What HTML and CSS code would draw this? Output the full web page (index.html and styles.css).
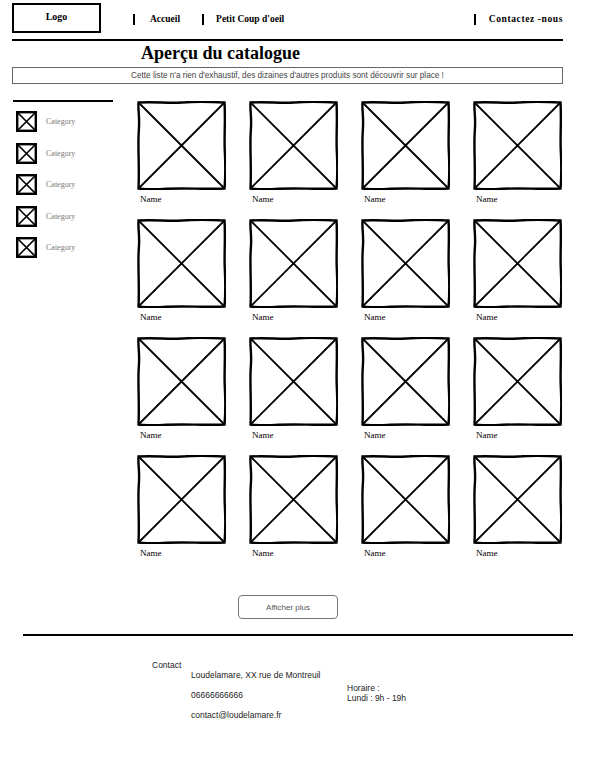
FILE: index.html
```html
<!DOCTYPE html>
<html lang="fr">
<head>
    <meta charset="UTF-8">
    <title>Aperçu du catalogue</title>
    <link rel="stylesheet" href="styles.css">
</head>
<body>
    <!-- formes réutilisées -->
    <svg class="defs" width="0" height="0">
        <symbol id="ph" viewBox="0 0 89 89">
            <path d="M1.5 1.5 C20 0.4 30 2.6 45 1.5 S70 0.6 87.5 1.5 C88.6 20 87 35 87.8 50 S88.6 75 87.5 87.5 C65 88.6 50 86.6 30 87.8 S10 88.2 1.5 87.5 C2.6 65 0.6 45 1.8 30 S0.8 10 1.5 1.5 Z" fill="#fff" stroke="#000" stroke-width="2.4"/>
            <path d="M1.5 1.5 L87.5 87.5 M87.5 1.5 L1.5 87.5" stroke="#000" stroke-width="1.8"/>
        </symbol>
        <symbol id="cat" viewBox="0 0 21 21">
            <rect x="1.2" y="1.2" width="18.6" height="18.6" fill="#fff" stroke="#000" stroke-width="2.4"/>
            <path d="M1.5 1.5 L19.5 19.5 M19.5 1.5 L1.5 19.5" stroke="#000" stroke-width="1.7"/>
        </symbol>
    </svg>

    <header class="topbar">
        <div class="logo">Logo</div>
        <nav class="nav">
            <a href="#" class="nav-link">Accueil</a>
            <a href="#" class="nav-link nav-short">Petit Coup d'oeil</a>
            <a href="#" class="nav-link nav-right">Contactez -nous</a>
        </nav>
    </header>

    <h1 class="title">Aperçu du catalogue</h1>
    <div class="banner">Cette liste n'a rien d'exhaustif, des dizaines d'autres produits sont  découvrir sur place !</div>

    <main class="catalogue">
        <aside class="sidebar">
            <ul class="categories">
                <li><svg class="cat-icon"><use href="#cat"/></svg>Category</li>
                <li><svg class="cat-icon"><use href="#cat"/></svg>Category</li>
                <li><svg class="cat-icon"><use href="#cat"/></svg>Category</li>
                <li><svg class="cat-icon"><use href="#cat"/></svg>Category</li>
                <li><svg class="cat-icon"><use href="#cat"/></svg>Category</li>
            </ul>
        </aside>

        <section class="grid">
            <div class="product"><svg class="thumb"><use href="#ph"/></svg><span class="name">Name</span></div>
            <div class="product"><svg class="thumb"><use href="#ph"/></svg><span class="name">Name</span></div>
            <div class="product"><svg class="thumb"><use href="#ph"/></svg><span class="name">Name</span></div>
            <div class="product"><svg class="thumb"><use href="#ph"/></svg><span class="name">Name</span></div>
            <div class="product"><svg class="thumb"><use href="#ph"/></svg><span class="name">Name</span></div>
            <div class="product"><svg class="thumb"><use href="#ph"/></svg><span class="name">Name</span></div>
            <div class="product"><svg class="thumb"><use href="#ph"/></svg><span class="name">Name</span></div>
            <div class="product"><svg class="thumb"><use href="#ph"/></svg><span class="name">Name</span></div>
            <div class="product"><svg class="thumb"><use href="#ph"/></svg><span class="name">Name</span></div>
            <div class="product"><svg class="thumb"><use href="#ph"/></svg><span class="name">Name</span></div>
            <div class="product"><svg class="thumb"><use href="#ph"/></svg><span class="name">Name</span></div>
            <div class="product"><svg class="thumb"><use href="#ph"/></svg><span class="name">Name</span></div>
            <div class="product"><svg class="thumb"><use href="#ph"/></svg><span class="name">Name</span></div>
            <div class="product"><svg class="thumb"><use href="#ph"/></svg><span class="name">Name</span></div>
            <div class="product"><svg class="thumb"><use href="#ph"/></svg><span class="name">Name</span></div>
            <div class="product"><svg class="thumb"><use href="#ph"/></svg><span class="name">Name</span></div>
        </section>
    </main>

    <div class="more">
        <button class="more-button">Afficher plus</button>
    </div>

    <footer class="footer">
        <div class="contact-label">Contact</div>
        <div class="contact-lines">
            <p>Loudelamare, XX rue de Montreuil</p>
            <p>06666666666</p>
            <p>contact@loudelamare.fr</p>
        </div>
        <div class="hours">
            <p>Horaire :</p>
            <p>Lundi : 9h - 19h</p>
        </div>
    </footer>
</body>
</html>
```

FILE: styles.css
```css
body {
    margin: 0;
    width: 605px;
    font-family: "Liberation Serif", "Times New Roman", serif;
    color: #000;
    background: #fff;
}
.defs {
    position: absolute;
}

/* en-tête */
.topbar {
    display: flex;
    align-items: center;
    width: 551px;
    margin-left: 12px;
    padding-top: 3px;
    padding-bottom: 6px;
    border-bottom: 2px solid #000;
}
.logo {
    width: 85px;
    height: 26px;
    border: 2px solid #000;
    border-bottom-width: 2.5px;
    text-align: center;
    font-size: 10px;
    font-weight: bold;
    line-height: 24px;
}
.nav {
    display: flex;
    flex: 1;
    align-items: center;
    margin-left: 32px;
    padding-top: 2px;
}
.nav-link {
    display: flex;
    align-items: center;
    margin-right: 22px;
    color: #000;
    text-decoration: none;
    font-size: 9.5px;
    font-weight: bold;
}
.nav-link::before {
    content: '';
    width: 2px;
    height: 11px;
    margin-right: 15px;
    background: #000;
}
.nav-short::before {
    margin-right: 12px;
}
.nav-right {
    margin-left: auto;
    margin-right: 0;
    letter-spacing: 0.6px;
}
.nav-right::before {
    margin-right: 13px;
}

/* titre */
.title {
    margin: 2px 0 0 141px;
    font-size: 18px;
    line-height: 21px;
}
.banner {
    width: 549px;
    height: 15px;
    margin: 3px 0 0 12px;
    border: 1px solid #666;
    text-align: center;
    font-family: "Liberation Sans", Arial, sans-serif;
    font-size: 8.2px;
    line-height: 15px;
    color: #444;
}

/* catalogue */
.catalogue {
    display: flex;
    padding-top: 16px;
}
.sidebar {
    width: 100px;
    margin-left: 13px;
    border-top: 2px solid #000;
}
.categories {
    list-style: none;
    margin: 0;
    padding: 9px 0 0 3px;
}
.categories li {
    display: flex;
    align-items: center;
    height: 21px;
    margin-bottom: 10.5px;
    font-size: 8px;
    color: #777;
}
.cat-icon {
    width: 21px;
    height: 21px;
    margin-right: 9px;
}
.grid {
    display: grid;
    grid-template-columns: repeat(4, 89px);
    column-gap: 23px;
    row-gap: 13px;
    margin-left: 24px;
    padding-top: 1px;
}
.product {
    display: flex;
    flex-direction: column;
}
.thumb {
    width: 89px;
    height: 89px;
}
.name {
    margin: 2px 0 0 3px;
    font-size: 9px;
    line-height: 14px;
}

/* bouton */
.more {
    padding: 35px 0 0 238px;
}
.more-button {
    width: 100px;
    height: 24px;
    border: 1px solid #777;
    border-radius: 4px;
    background: #fff;
    font-family: "Liberation Sans", Arial, sans-serif;
    font-size: 8px;
    color: #555;
}

/* pied de page */
.footer {
    display: flex;
    width: 550px;
    margin: 15px 0 0 23px;
    padding: 24px 0 0 129px;
    border-top: 2px solid #000;
    box-sizing: border-box;
    font-family: "Liberation Sans", Arial, sans-serif;
    font-size: 8.5px;
    color: #222;
}
.footer p {
    margin: 0;
}
.contact-label {
    width: 39px;
    line-height: 10px;
}
.contact-lines {
    width: 156px;
    padding-top: 10px;
}
.contact-lines p {
    line-height: 10px;
    margin-bottom: 10px;
}
.hours {
    padding-top: 23px;
    line-height: 10px;
}
```
